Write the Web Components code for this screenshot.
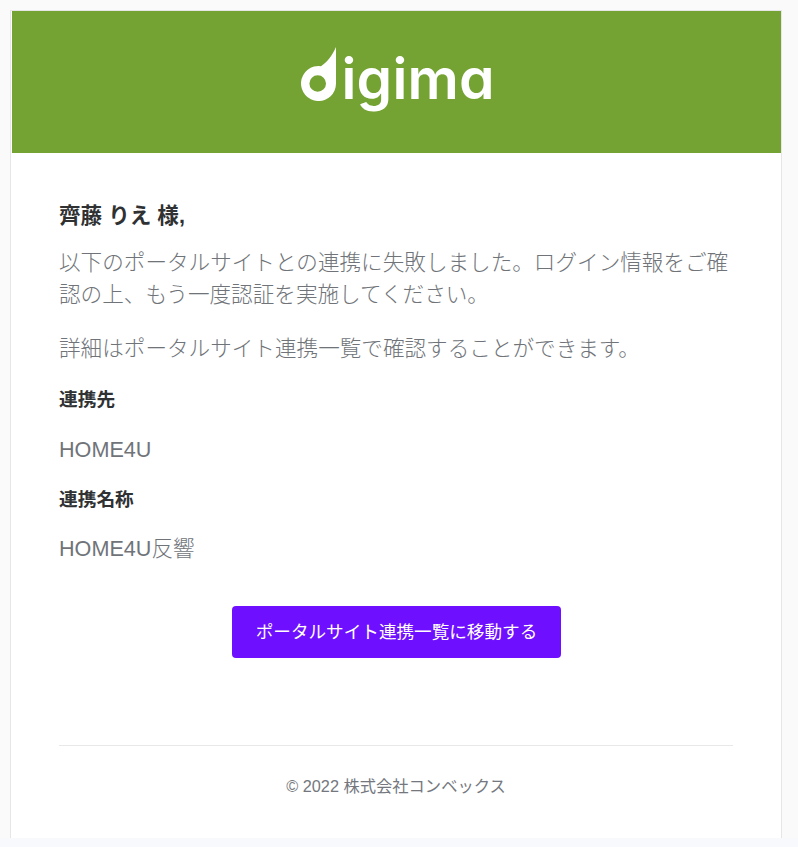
<!DOCTYPE html>
<html lang="ja"><head><meta charset="utf-8"><title>digima</title>
<style>
html,body{margin:0;padding:0;background:#f8f9fc}
body{font-family:"Liberation Sans","Noto Sans CJK JP",sans-serif;height:847px;overflow:hidden}
</style></head><body>
<template id="t-logo"><style>
:host{display:flex;align-items:flex-start;height:70px;color:#fff;width:192px}
svg{display:block;flex:none;margin:1px 5px 0 0}
span{font:600 57px/70px Inter,sans-serif;font-feature-settings:"cv11";letter-spacing:.2px;margin-top:-2px;height:70px;white-space:nowrap}
</style>
<svg width="36" height="54" viewBox="0 0 36 54"><path fill="#fff" fill-rule="evenodd" d="M35 0V36.5A17.5 17.5 0 1 1 20 19.2C26 15 31 9 35 0ZM8.4 36.5a8.3 8.3 0 1 0 16.6 0a8.3 8.3 0 1 0 -16.6 0Z"/></svg><span>igima</span></template>

<template id="t-header"><style>
:host{display:flex;justify-content:center;background:#74a333;height:142px;padding-top:35px;box-sizing:border-box;margin-left:1px}
</style><slot></slot></template>

<template id="t-card"><style>
:host{display:block;box-sizing:border-box;width:772px;height:828px;background:#fff;border:1px solid #e6e6e6;border-bottom:0;margin:0 0 0 10px}
.b{padding:0 48px;display:flex;flex-direction:column}
</style><slot name="head"></slot><div class="b"><slot></slot></div></template>

<template id="t-label"><style>
:host{display:block;font-size:18.72px;font-weight:700;line-height:24px;color:#2f3133}
:host([big]){font-size:21.6px}
</style><slot></slot></template>

<template id="t-para"><style>
:host{display:block;font-size:21.6px;line-height:32px;color:#707479;font-weight:300}
</style><slot></slot></template>

<template id="t-button"><style>
:host{display:flex;justify-content:center}
a{display:block;background:#6f0fff;color:#fff;border-radius:4px;font-size:17.6px;line-height:52px;height:52px;padding:0 23.7px;margin-left:1px;text-decoration:none;white-space:nowrap}
</style><a href="#"><slot></slot></a></template>

<template id="t-footer"><style>
:host{display:block;border-top:1px solid #e8e8e8;text-align:center;font-size:16.3px;line-height:24px;color:#74787e;padding-top:28px}
</style><slot></slot></template>

<template id="t-page"><style>
:host{display:block;background:#fafafa;height:838px;padding-top:10px;box-sizing:border-box;overflow:hidden}
</style><slot></slot></template>

<x-page>
<x-card>
<x-header slot="head"><x-logo></x-logo></x-header>
<x-label big style="margin-top:51px">齊藤 りえ 様,</x-label>
<x-para style="margin-top:19px">以下のポータルサイトとの連携に失敗しました。ログイン情報をご確認の上、もう一度認証を実施してください。</x-para>
<x-para style="margin-top:22px">詳細はポータルサイト連携一覧で確認することができます。</x-para>
<x-label style="margin-top:23px">連携先</x-label>
<x-para style="margin-top:22px">HOME4U</x-para>
<x-label style="margin-top:22px">連携名称</x-label>
<x-para style="margin-top:21px">HOME4U反響</x-para>
<x-button style="margin-top:41px">ポータルサイト連携一覧に移動する</x-button>
<x-footer style="margin-top:87px">© 2022 株式会社コンベックス</x-footer>
</x-card>
</x-page>
<script>
for(const [n,t] of [['x-logo','t-logo'],['x-header','t-header'],['x-card','t-card'],['x-label','t-label'],['x-para','t-para'],['x-button','t-button'],['x-footer','t-footer'],['x-page','t-page']]){
customElements.define(n,class extends HTMLElement{constructor(){super();this.attachShadow({mode:'open'}).appendChild(document.getElementById(t).content.cloneNode(true));}});
}
</script>
</body></html>
